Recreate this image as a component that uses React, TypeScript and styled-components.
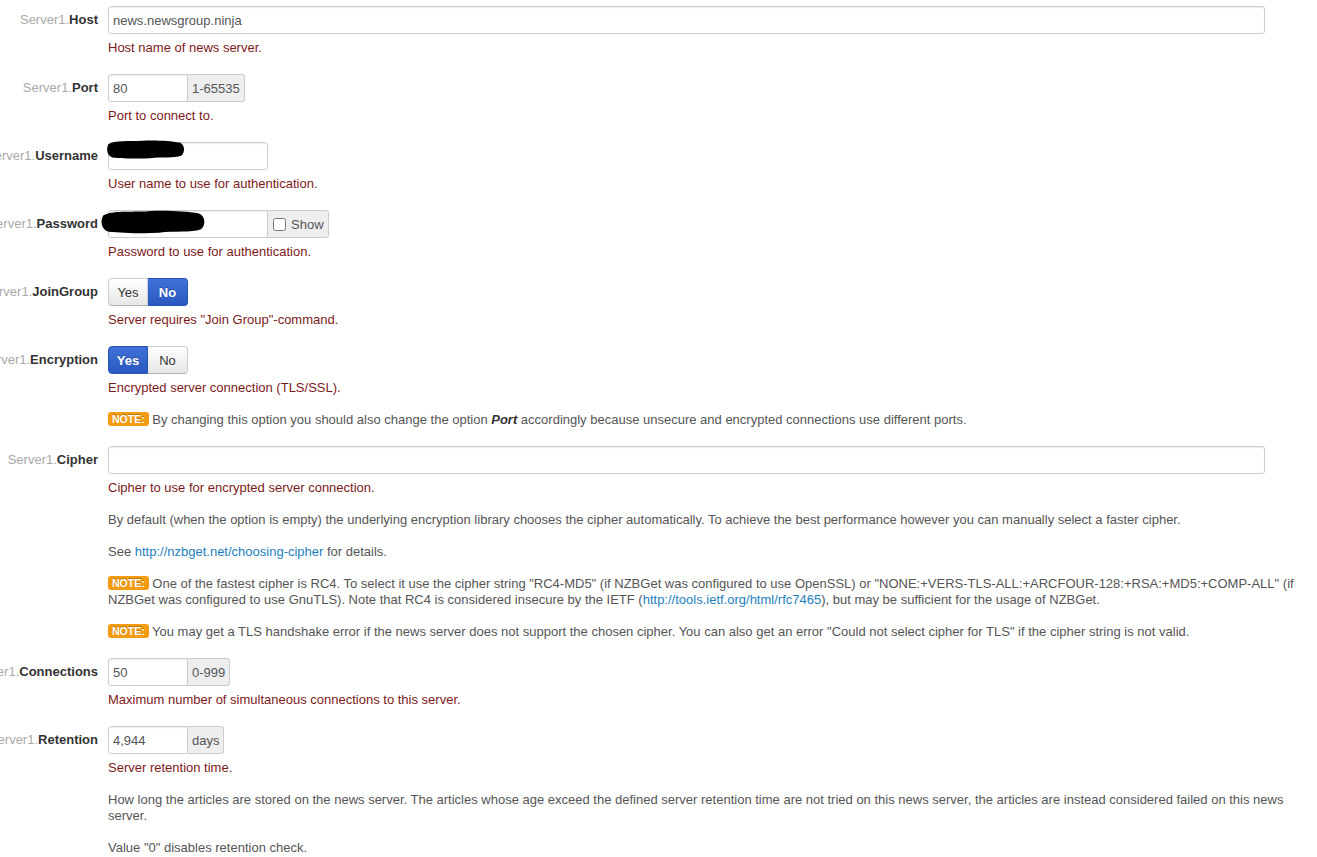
import styled, { createGlobalStyle, css } from "styled-components";

const GlobalStyle = createGlobalStyle`
  html, body {
    margin: 0;
    padding: 0;
    background: #fff;
    overflow: hidden;
  }
  body {
    font-family: "Liberation Sans", Arial, Helvetica, sans-serif;
    font-size: 13px;
    color: #333;
  }
`;

function Note() {
  return <NoteLabel>NOTE:</NoteLabel>;
}

function Blob({ width, left, top, height }: { width: number; left: number; top: number; height: number }) {
  return (
    <BlobMark style={{ left, top, width, height }} viewBox="0 0 100 24" preserveAspectRatio="none">
      <path
        d="M3 6 C10 1 30 3 45 2 C60 1 80 2 92 4 C99 6 99 16 94 19 C85 22 70 20 55 22 C40 23 20 22 8 21 C1 19 0 11 3 6 Z"
        fill="#000"
      />
    </BlobMark>
  );
}

function Toggle({ value }: { value: boolean }) {
  return (
    <BtnGroup>
      <ToggleBtn $active={value}>Yes</ToggleBtn>
      <ToggleBtn $active={!value}>No</ToggleBtn>
    </BtnGroup>
  );
}

function Label({ name }: { name: string }) {
  return (
    <ControlLabel>
      <Prefix>Server1.</Prefix>
      <Name>{name}</Name>
    </ControlLabel>
  );
}

export default function App() {
  return (
    <Page>
      <GlobalStyle />

      <ControlGroup>
        <Label name="Host" />
        <Controls>
          <TextInput $width={1157} defaultValue="news.newsgroup.ninja" />
          <Help>Host name of news server.</Help>
        </Controls>
      </ControlGroup>

      <ControlGroup>
        <Label name="Port" />
        <Controls>
          <InputAppend>
            <TextInput $width={80} $joined defaultValue="80" />
            <AddOn>1-65535</AddOn>
          </InputAppend>
          <Help>Port to connect to.</Help>
        </Controls>
      </ControlGroup>

      <ControlGroup>
        <Label name="Username" />
        <Controls>
          <Masked>
            <TextInput $width={160} defaultValue="" />
            <Blob left={-2} top={-3} width={80} height={21} />
          </Masked>
          <Help>User name to use for authentication.</Help>
        </Controls>
      </ControlGroup>

      <ControlGroup>
        <Label name="Password" />
        <Controls>
          <InputAppend>
            <Masked>
              <TextInput $width={160} $joined type="text" defaultValue="" />
              <Blob left={-8} top={-1} width={107} height={26} />
            </Masked>
            <AddOn>
              <CheckBox type="checkbox" />
              Show
            </AddOn>
          </InputAppend>
          <Help>Password to use for authentication.</Help>
        </Controls>
      </ControlGroup>

      <ControlGroup>
        <Label name="JoinGroup" />
        <Controls>
          <Toggle value={false} />
          <Help>Server requires "Join Group"-command.</Help>
        </Controls>
      </ControlGroup>

      <ControlGroup>
        <Label name="Encryption" />
        <Controls>
          <Toggle value={true} />
          <Help>Encrypted server connection (TLS/SSL).</Help>
          <Para>
            <Note /> By changing this option you should also change the option <em><b>Port</b></em> accordingly
            because unsecure and encrypted connections use different ports.
          </Para>
        </Controls>
      </ControlGroup>

      <ControlGroup>
        <Label name="Cipher" />
        <Controls>
          <TextInput $width={1157} defaultValue="" />
          <Help>Cipher to use for encrypted server connection.</Help>
          <Para>
            By default (when the option is empty) the underlying encryption library chooses the cipher
            automatically. To achieve the best performance however you can manually select a faster cipher.
          </Para>
          <Para>
            See <Link href="#">http://nzbget.net/choosing-cipher</Link> for details.
          </Para>
          <Para>
            <Note /> One of the fastest cipher is RC4. To select it use the cipher string "RC4-MD5" (if NZBGet was
            configured to use OpenSSL) or "NONE:+VERS-TLS-ALL:+ARCFOUR-128:+RSA:+MD5:+COMP-ALL" (if NZBGet was
            configured to use GnuTLS). Note that RC4 is considered insecure by the IETF (
            <Link href="#">http://tools.ietf.org/html/rfc7465</Link>), but may be sufficient for the usage of
            NZBGet.
          </Para>
          <Para>
            <Note /> You may get a TLS handshake error if the news server does not support the chosen cipher. You
            can also get an error "Could not select cipher for TLS" if the cipher string is not valid.
          </Para>
        </Controls>
      </ControlGroup>

      <ControlGroup>
        <Label name="Connections" />
        <Controls>
          <InputAppend>
            <TextInput $width={80} $joined defaultValue="50" />
            <AddOn>0-999</AddOn>
          </InputAppend>
          <Help>Maximum number of simultaneous connections to this server.</Help>
        </Controls>
      </ControlGroup>

      <ControlGroup>
        <Label name="Retention" />
        <Controls>
          <InputAppend>
            <TextInput $width={80} $joined defaultValue="4,944" />
            <AddOn>days</AddOn>
          </InputAppend>
          <Help>Server retention time.</Help>
          <Para>
            How long the articles are stored on the news server. The articles whose age exceed the defined server
            retention time are not tried on this news server, the articles are instead considered failed on this
            news server.
          </Para>
          <Para>Value "0" disables retention check.</Para>
        </Controls>
      </ControlGroup>
    </Page>
  );
}

/* Styled Components */

const Page = styled.div`
  padding-top: 6px;
  width: 1317px;
`;

const ControlGroup = styled.div`
  display: flex;
  align-items: flex-start;
  margin-bottom: 18px;
`;

const ControlLabel = styled.div`
  width: 98px;
  flex-shrink: 0;
  display: flex;
  justify-content: flex-end;
  white-space: nowrap;
  margin-right: 10px;
  padding-top: 6px;
  line-height: 16px;
`;

const Prefix = styled.span`
  color: #a9a9a9;
`;

const Name = styled.span`
  font-weight: bold;
  color: #333;
`;

const Controls = styled.div`
  flex: 1;
  padding-right: 12px;
  min-width: 0;
`;

const TextInput = styled.input<{ $width: number; $joined?: boolean }>`
  display: block;
  box-sizing: border-box;
  width: ${(p) => p.$width}px;
  height: 28px;
  padding: 4px 4px;
  border: 1px solid #ccc;
  border-radius: ${(p) => (p.$joined ? "3px 0 0 3px" : "3px")};
  font-family: inherit;
  font-size: 13px;
  color: #555;
  background: #fff;
  box-shadow: inset 0 1px 1px rgba(0, 0, 0, 0.075);
  outline: none;
`;

const InputAppend = styled.div`
  display: flex;
  align-items: stretch;
`;

const AddOn = styled.span`
  display: flex;
  align-items: center;
  box-sizing: border-box;
  height: 28px;
  padding: 0 4px;
  background: #eee;
  border: 1px solid #ccc;
  border-left: none;
  border-radius: 0 3px 3px 0;
  color: #555;
  white-space: nowrap;
`;

const CheckBox = styled.input`
  width: 13px;
  height: 13px;
  margin: 0 5px 0 1px;
`;

const Masked = styled.div`
  position: relative;
`;

const BlobMark = styled.svg`
  position: absolute;
  pointer-events: none;
`;

const BtnGroup = styled.div`
  display: inline-flex;
`;

const ToggleBtn = styled.button<{ $active: boolean }>`
  box-sizing: border-box;
  width: 40px;
  height: 28px;
  padding: 0;
  font-family: inherit;
  font-size: 13px;
  border: 1px solid #ccc;
  border-bottom-color: #b3b3b3;
  cursor: pointer;
  color: #333;
  background: linear-gradient(to bottom, #ffffff, #e6e6e6);
  text-shadow: 0 1px 1px rgba(255, 255, 255, 0.75);

  &:first-child {
    border-radius: 4px 0 0 4px;
  }
  &:last-child {
    border-radius: 0 4px 4px 0;
    border-left: none;
  }

  ${(p) =>
    p.$active &&
    css`
      color: #fff;
      font-weight: bold;
      border-color: #2553b8;
      background: linear-gradient(to bottom, #3f72d6, #2a58c0);
      text-shadow: 0 -1px 0 rgba(0, 0, 0, 0.25);
    `}
`;

const Help = styled.div`
  margin-top: 6px;
  line-height: 16px;
  color: #7d1a1a;
`;

const Para = styled.p`
  margin: 16px 0 0;
  line-height: 16px;
  color: #555;

  em b {
    color: #333;
  }
`;

const Link = styled.a`
  color: #1e7fc0;
  text-decoration: none;
`;

const NoteLabel = styled.span`
  display: inline-block;
  padding: 1px 4px 1px;
  border-radius: 3px;
  background: #f39c12;
  color: #fff;
  font-size: 10.5px;
  font-weight: bold;
  line-height: 12px;
  vertical-align: 1px;
  text-shadow: 0 -1px 0 rgba(0, 0, 0, 0.25);
`;
